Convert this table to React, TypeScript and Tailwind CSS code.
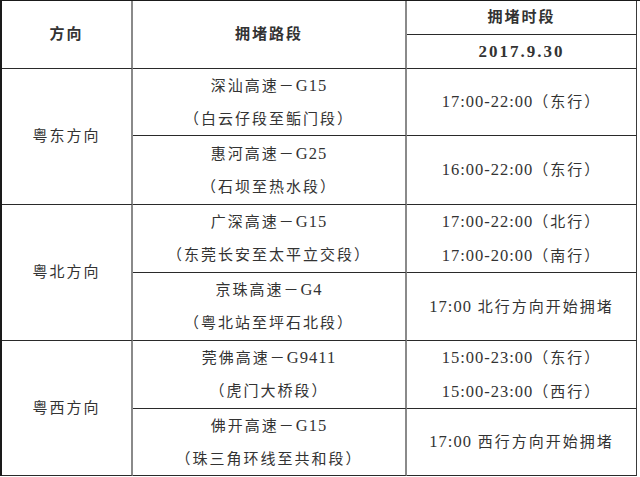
const font = {
  fontFamily: '"Liberation Serif", "Noto Sans CJK SC", serif',
};

const cell =
  "flex flex-col items-center justify-center border-b border-b-[#2a2a2a] text-[15px] tracking-[2px] text-[#333]";
const colA = `${cell} border-r-2 border-r-[#8a8a8a]`;
const colB = `${cell} border-r-2 border-r-[#8a8a8a]`;
const colC = `${cell} border-r border-r-[#3a3a3a]`;
const head = "font-bold text-[#111]";

type Road = { name: string; part: string; times: string[] };
type Group = { dir: string; roads: Road[] };

const groups: Group[] = [
  {
    dir: "粤东方向",
    roads: [
      { name: "深汕高速－G15", part: "（白云仔段至鲘门段）", times: ["17:00-22:00（东行）"] },
      { name: "惠河高速－G25", part: "（石坝至热水段）", times: ["16:00-22:00（东行）"] },
    ],
  },
  {
    dir: "粤北方向",
    roads: [
      {
        name: "广深高速－G15",
        part: "（东莞长安至太平立交段）",
        times: ["17:00-22:00（北行）", "17:00-20:00（南行）"],
      },
      { name: "京珠高速－G4", part: "（粤北站至坪石北段）", times: ["17:00 北行方向开始拥堵"] },
    ],
  },
  {
    dir: "粤西方向",
    roads: [
      {
        name: "莞佛高速－G9411",
        part: "（虎门大桥段）",
        times: ["15:00-23:00（东行）", "15:00-23:00（西行）"],
      },
      { name: "佛开高速－G15", part: "（珠三角环线至共和段）", times: ["17:00 西行方向开始拥堵"] },
    ],
  },
];

// latin runs are set a bit larger, like the half-width digits in the original
function Mixed({ text }: { text: string }) {
  const parts = text.split(/([\x21-\x7e]+)/);
  return (
    <span>
      {parts.map((p, i) =>
        /^[\x21-\x7e]+$/.test(p) ? (
          <span key={i} className="text-[16.5px] tracking-[1px]">
            {p}
          </span>
        ) : (
          <span key={i}>{p}</span>
        )
      )}
    </span>
  );
}

export default function App() {
  return (
    <div className="h-[477px] w-[640px] bg-white" style={font}>
      <div className="grid grid-cols-[131px_274px_230px] grid-rows-[34px_34px_67px_69px_68px_68px_68px_67px] border-l-2 border-t border-l-[#1a1a1a] border-t-[#1a1a1a]">
        <div className={`${colA} ${head} row-span-2`}>方向</div>
        <div className={`${colB} ${head} row-span-2`}>拥堵路段</div>
        <div className={`${colC} ${head}`}>拥堵时段</div>
        <div className={`${colC} ${head} text-[17px] tracking-[1.5px]`}>2017.9.30</div>

        {groups.map((g) => (
          <Rows key={g.dir} group={g} />
        ))}
      </div>
    </div>
  );
}

function Rows({ group }: { group: Group }) {
  return (
    <>
      <div className={`${colA} row-span-2`}>{group.dir}</div>
      {group.roads.map((r) => (
        <RoadRow key={r.name} road={r} />
      ))}
    </>
  );
}

function RoadRow({ road }: { road: Road }) {
  return (
    <>
      <div className={`${colB} col-start-2 gap-[14px] leading-[19px]`}>
        <Mixed text={road.name} />
        <span>{road.part}</span>
      </div>
      <div className={`${colC} gap-[14px] leading-[19px]`}>
        {road.times.map((t) => (
          <Mixed key={t} text={t} />
        ))}
      </div>
    </>
  );
}
